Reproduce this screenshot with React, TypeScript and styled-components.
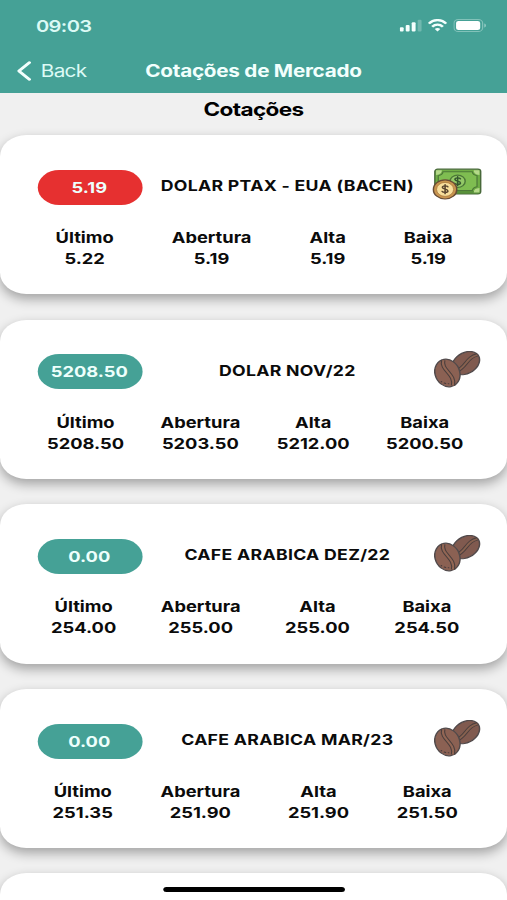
import React from 'react';
import styled, { createGlobalStyle } from 'styled-components';

const TEAL = '#45a196';

const GlobalStyle = createGlobalStyle`
  *, *::before, *::after { box-sizing: border-box; }
  html, body { margin: 0; height: 100%; overflow: hidden; background: #f0f0f0; }
  svg { display: block; }
`;

const Viewport = styled.div`
  width: 507px;
  height: 900px;
  overflow: hidden;
`;

/* The phone layout is 416 units wide and is widened to fill the viewport. */
const Screen = styled.div`
  position: relative;
  display: flex;
  flex-direction: column;
  width: 416px;
  height: 900px;
  overflow: hidden;
  transform: scaleX(1.21875);
  transform-origin: 0 0;
  background: #f0f0f0;
  color: #0b0b0b;
  font-family: Inter, 'Liberation Sans', sans-serif;
`;

const Header = styled.header`
  flex: none;
  height: 93px;
  background: ${TEAL};
  color: #f2fffd;
`;

const StatusBar = styled.div`
  display: flex;
  align-items: center;
  justify-content: space-between;
  height: 50px;
  padding: 1px 17.3px 0 29.5px;
`;

const Clock = styled.span`
  color: #dcfaf5;
  font-size: 16.5px;
  font-weight: 600;
  line-height: 20px;
  letter-spacing: -0.5px;
`;

const StatusIcons = styled.div`
  display: flex;
  align-items: center;
  gap: 4.5px;
`;

const NavBar = styled.nav`
  display: grid;
  grid-template-columns: 1fr auto 1fr;
  align-items: center;
  height: 42px;
  padding: 0 14px;
`;

const BackButton = styled.button`
  display: flex;
  align-items: center;
  gap: 7.5px;
  padding: 0;
  border: 0;
  background: none;
  color: #dcfaf5;
  font: 400 17px/20px Inter, 'Liberation Sans', sans-serif;
  letter-spacing: -0.6px;
`;

const NavTitle = styled.h1`
  margin: 0;
  font-size: 17px;
  font-weight: 700;
  line-height: 20px;
  letter-spacing: -0.22px;
`;

const NavEnd = styled.span``;

const Heading = styled.h2`
  flex: none;
  height: 42px;
  margin: 0;
  padding-top: 5px;
  color: #000;
  font-size: 18.5px;
  font-weight: 700;
  line-height: 22px;
  letter-spacing: -0.55px;
  text-align: center;
`;

const List = styled.main`
  display: flex;
  flex-direction: column;
  gap: 25.2px;
`;

const Card = styled.article`
  flex: none;
  height: 159.4px;
  padding-top: 31px;
  border-radius: 21.5px;
  background: #fff;
  box-shadow: 0 5px 11px rgba(0, 0, 0, 0.33);
`;

const CardTop = styled.div`
  display: flex;
  align-items: flex-start;
  height: 54px;
  padding: 0 20px 0 31px;
`;

const Pill = styled.span<{ $down?: boolean }>`
  display: flex;
  align-items: center;
  justify-content: center;
  width: 85.5px;
  height: 35px;
  margin-top: 3.8px;
  border-radius: 18px;
  background: ${(p) => (p.$down ? '#e63030' : TEAL)};
  color: #eefffc;
  font-size: 15px;
  font-weight: 700;
  padding-right: 1px;
`;

const Name = styled.h3`
  flex: 1;
  margin: 0;
  padding: 10px 0 0 1px;
  font-size: 14.5px;
  font-weight: 700;
  line-height: 20px;
  letter-spacing: 0.25px;
  text-align: center;
  white-space: nowrap;
`;

const Figures = styled.dl<{ $wide?: boolean }>`
  display: flex;
  justify-content: space-around;
  margin: 0;
  padding: 7px 20.8px 0 ${(p) => (p.$wide ? '23.6px' : '21.8px')};
`;

const Figure = styled.div`
  text-align: center;
  font-size: 15px;
  font-weight: 700;
  line-height: 21px;
`;

const Label = styled.dt``;

const Value = styled.dd`
  margin: 0;
`;

const HomeIndicator = styled.div`
  position: absolute;
  left: 134px;
  bottom: 8px;
  width: 148.5px;
  height: 5.5px;
  border-radius: 3px;
  background: #000;
`;

const SignalIcon = () => (
  <svg width="19" height="13" viewBox="0 0 19 13" fill="#f4fffd">
    <rect x="0" y="8.3" width="3.2" height="4.2" rx="1" />
    <rect x="4.9" y="6" width="3.2" height="6.5" rx="1" />
    <rect x="9.8" y="3.2" width="3.2" height="9.3" rx="1" />
    <rect x="14.7" y="0.8" width="3.2" height="11.7" rx="1" opacity=".25" />
  </svg>
);

const WifiIcon = () => (
  <svg width="16" height="13" viewBox="0 0 16 13" fill="none" stroke="#f4fffd" strokeWidth="2.2">
    <path d="M.9 4.6C5-.1 11-.1 15.1 4.6" />
    <path d="M3.6 7.7c2.6-2.8 6.2-2.8 8.8 0" />
    <path d="M8 12.4 5.7 9.9c1.3-1.3 3.3-1.3 4.6 0z" fill="#f4fffd" stroke="none" />
  </svg>
);

const BatteryIcon = () => (
  <svg width="27" height="13" viewBox="0 0 27 13">
    <rect x=".5" y=".5" width="23.5" height="12" rx="3.6" fill="none" stroke="#f4fffd" opacity=".35" />
    <rect x="2.2" y="2.1" width="19.8" height="8.8" rx="2" fill="#fff" />
    <path d="M25.3 4.6v4c1-.4 1.5-1.1 1.5-2s-.5-1.6-1.5-2z" fill="#f4fffd" opacity=".4" />
  </svg>
);

const ChevronLeft = () => (
  <svg width="12" height="20" viewBox="0 0 12 20" fill="none" stroke="#f2fffd" strokeWidth="2.5" strokeLinecap="round" strokeLinejoin="round">
    <path d="M10.2 1.5 1.5 10l8.7 8.5" />
  </svg>
);

const Dollar = ({ x, y, color }: { x: number; y: number; color: string }) => (
  <path
    transform={`translate(${x} ${y})`}
    d="M2.3-2.3C1.5-3.7-2.2-3.6-2.2-1.7-2.2.3 2.3-.4 2.3 1.7 2.3 3.6-1.6 3.7-2.4 2.2M0-4.5v9"
    fill="none"
    stroke={color}
    strokeWidth="1.3"
    strokeLinecap="round"
  />
);

const MoneyIcon = () => (
  <svg width="42" height="38" viewBox="0 0 42 38">
    <rect x="2.8" y="3.2" width="37.6" height="24.7" rx="2.3" fill="#6fae45" stroke="#48683a" strokeWidth="1.2" />
    <path d="M3.5 25h36.3v1.3a1.3 1.3 0 0 1-1.3 1.3h-35z" fill="#58913a" />
    <path d="M9.5 5.8h24c.3 2.4 1.5 3.5 3.9 3.9v11c-2.4.4-3.6 1.5-3.9 3.9h-24c-.3-2.4-1.5-3.5-3.9-3.9v-11c2.4-.4 3.6-1.5 3.9-3.9z" fill="#7fbd51" stroke="#4c7838" strokeWidth="1" />
    <path d="M3.8 4.2h4.7c0 2.6-1.5 4.5-4.7 4.7zM39.4 4.2h-4.7c0 2.6 1.5 4.5 4.7 4.7zM39.4 26.5h-4.7c0-2.6 1.5-4.3 4.7-4.5z" fill="#b5d98a" />
    <circle cx="21.5" cy="15.3" r="6.2" fill="#93c967" stroke="#4c7838" strokeWidth="1.2" />
    <Dollar x={21.5} y={15.2} color="#34562e" />
    <circle cx="11.2" cy="23.4" r="9.6" fill="#c9954f" stroke="#674c35" strokeWidth="1.2" />
    <circle cx="11.2" cy="23.4" r="7" fill="#f8df9c" stroke="#a8793f" strokeWidth=".7" />
    <Dollar x={11.2} y={23.2} color="#59452f" />
  </svg>
);

const BeansIcon = () => (
  <svg width="42" height="38" viewBox="0 0 42 38" strokeLinecap="round">
    <g transform="rotate(42 28.2 12.1)">
      <ellipse cx="28.2" cy="12.1" rx="9.7" ry="13" fill="#805a4f" stroke="#514a4b" strokeWidth="1.2" />
      <path d="M29.8-.3c-5.5 8 2 15-2.200 24.800" fill="none" stroke="#4a3e3d" strokeWidth="3.3" strokeLinecap="butt" />
      <path d="M29.8-.3c-5.5 8 2 15-2.200 24.800" fill="none" stroke="#87614f" strokeWidth="1.6" strokeLinecap="butt" />
    </g>
    <g transform="rotate(-12 13.1 22)">
      <ellipse cx="13.1" cy="22" rx="10.2" ry="13.9" fill="#8b6153" stroke="#514a4b" strokeWidth="1.2" />
      <path d="M12.5 8.7c-4.5 9.5 7 15.5 2.5 26.500" fill="none" stroke="#4a3e3d" strokeWidth="3.6" strokeLinecap="butt" />
      <path d="M12.5 8.7c-4.5 9.5 7 15.5 2.5 26.500" fill="none" stroke="#926654" strokeWidth="1.8" strokeLinecap="butt" />
      <path d="M6.4 29.2l.3.5M8.5 31.2l1 .8M11.5 32.700l.5.100" stroke="#4a3e3d" strokeWidth="1" />
    </g>
  </svg>
);

interface Quote {
  name: string;
  badge: string;
  down?: boolean;
  icon: 'money' | 'beans';
  values: [string, string, string, string];
}

const labels = ['Último', 'Abertura', 'Alta', 'Baixa'];

const quotes: Quote[] = [
  { name: 'DOLAR PTAX - EUA (BACEN)', badge: '5.19', down: true, icon: 'money', values: ['5.22', '5.19', '5.19', '5.19'] },
  { name: 'DOLAR NOV/22', badge: '5208.50', icon: 'beans', values: ['5208.50', '5203.50', '5212.00', '5200.50'] },
  { name: 'CAFE ARABICA DEZ/22', badge: '0.00', icon: 'beans', values: ['254.00', '255.00', '255.00', '254.50'] },
  { name: 'CAFE ARABICA MAR/23', badge: '0.00', icon: 'beans', values: ['251.35', '251.90', '251.90', '251.50'] },
];

const QuoteCard = ({ quote }: { quote: Quote }) => (
  <Card>
    <CardTop>
      <Pill $down={quote.down}>{quote.badge}</Pill>
      <Name>{quote.name}</Name>
      {quote.icon === 'money' ? <MoneyIcon /> : <BeansIcon />}
    </CardTop>
    <Figures $wide={quote.values[0].length > 4}>
      {labels.map((label, i) => (
        <Figure key={label}>
          <Label>{label}</Label>
          <Value>{quote.values[i]}</Value>
        </Figure>
      ))}
    </Figures>
  </Card>
);

export default function App() {
  return (
    <Viewport>
      <GlobalStyle />
      <Screen>
        <Header>
          <StatusBar>
            <Clock>09:03</Clock>
            <StatusIcons>
              <SignalIcon />
              <WifiIcon />
              <BatteryIcon />
            </StatusIcons>
          </StatusBar>
          <NavBar>
            <BackButton>
              <ChevronLeft />
              Back
            </BackButton>
            <NavTitle>Cotações de Mercado</NavTitle>
            <NavEnd />
          </NavBar>
        </Header>
        <Heading>Cotações</Heading>
        <List>
          {quotes.map((quote) => (
            <QuoteCard key={quote.name} quote={quote} />
          ))}
          <Card />
        </List>
        <HomeIndicator />
      </Screen>
    </Viewport>
  );
}
